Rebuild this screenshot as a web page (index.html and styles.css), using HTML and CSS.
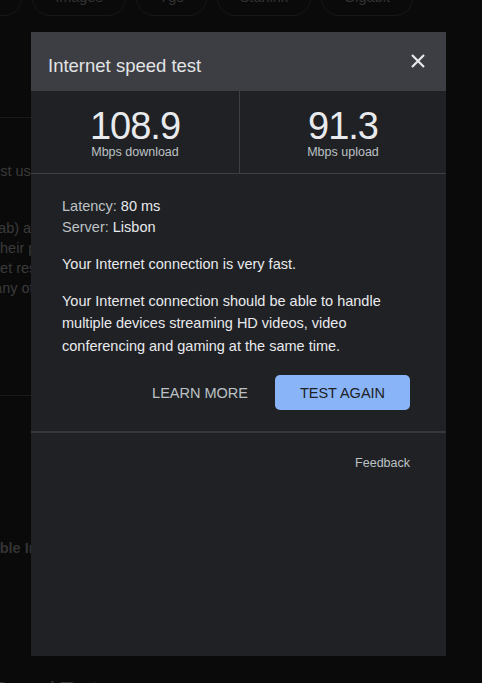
FILE: index.html
```html
<!DOCTYPE html>
<html lang="en">
  <head>
    <meta charset="UTF-8" />
    <meta name="viewport" content="width=device-width, initial-scale=1.0" />
    <title>Internet speed test</title>
    <link rel="stylesheet" href="styles.css">
  </head>
  <body>
    <div class="page">
      <div class="chips">
        <span class="chip">All</span>
        <span class="chip">Images</span>
        <span class="chip">Ygs</span>
        <span class="chip">Starlink</span>
        <span class="chip">Gigabit</span>
      </div>
      <div class="rule rule-top"></div>
      <p class="snip first">most usually</p>
      <p class="snip gap shift-a">(kab) are</p>
      <p class="snip shift-b">their p</p>
      <p class="snip shift-c">Internet res</p>
      <p class="snip shift-d">many ot</p>
      <div class="rule rule-mid"></div>
      <p class="snip bold">Reliable Internet</p>
      <h3 class="snip-head">Speed Test</h3>
    </div>

    <div class="dialog">
      <div class="dialog-header">
        <h2>Internet speed test</h2>
        <svg class="close" width="16" height="16" viewBox="0 0 16 16">
          <path d="M2 2 L14 14 M14 2 L2 14" stroke="#e8eaed" stroke-width="2.2" fill="none" />
        </svg>
      </div>
      <div class="stats">
        <div class="stat">
          <div class="value">108.9</div>
          <div class="unit">Mbps download</div>
        </div>
        <div class="stat">
          <div class="value">91.3</div>
          <div class="unit">Mbps upload</div>
        </div>
      </div>
      <div class="details">
        <div class="meta">
          <div><span class="label">Latency:</span> 80 ms</div>
          <div><span class="label">Server:</span> Lisbon</div>
        </div>
        <p>Your Internet connection is very fast.</p>
        <p>Your Internet connection should be able to handle multiple devices streaming HD videos, video conferencing and gaming at the same time.</p>
        <div class="actions">
          <button class="btn btn-text">LEARN MORE</button>
          <button class="btn btn-primary">TEST AGAIN</button>
        </div>
      </div>
      <div class="dialog-footer">
        <span>Feedback</span>
      </div>
    </div>
  </body>
</html>
```

FILE: styles.css
```css
body {
  margin: 0;
  background-color: #0a0a0a;
  font-family: "Liberation Sans", Arial, sans-serif;
  overflow: hidden;
  height: 683px;
}
.page {
  color: #3a3a3a;
  font-size: 14.5px;
}
.chips {
  display: flex;
  gap: 10px;
  margin-top: -22px;
  margin-left: -40px;
}
.chip {
  height: 36px;
  padding: 0 22px;
  border: 1px solid #181818;
  border-radius: 18px;
  display: flex;
  align-items: center;
  color: #333;
}
.rule {
  height: 1px;
  background-color: #1a1a1a;
  width: 40px;
}
.rule-top {
  margin-top: 101px;
}
.rule-mid {
  margin-top: 97px;
}
.snip {
  margin: 0;
  line-height: 20px;
  white-space: nowrap;
  margin-left: -20px;
}
.snip.first {
  margin-top: 43px;
}
.snip.gap {
  margin-top: 37px;
}
.shift-a {
  margin-left: -14px;
}
.shift-b {
  margin-left: -4px;
}
.shift-c {
  margin-left: -37px;
}
.shift-d {
  margin-left: -18px;
}
.snip.bold {
  margin-top: 142px;
  margin-left: -35px;
  font-weight: bold;
  color: #333;
}
.snip-head {
  margin: 119px 0 0 -6px;
  font-size: 21px;
  font-weight: normal;
  color: #363636;
}

.dialog {
  position: fixed;
  left: 31px;
  top: 32px;
  width: 415px;
  height: 624px;
  background-color: #202124;
  display: flex;
  flex-direction: column;
  color: #e8eaed;
}
.dialog-header {
  height: 59px;
  background-color: #3c3e43;
  display: flex;
  align-items: center;
  justify-content: space-between;
  padding: 0 20px 0 17px;
  flex-shrink: 0;
}
.dialog-header h2 {
  margin: 0;
  font-size: 18.5px;
  font-weight: normal;
  color: #e3e4e6;
  padding-top: 8px;
}
.close {
  margin-top: -2px;
}
.stats {
  display: grid;
  grid-template-columns: 208px 1fr;
  height: 82px;
  border-bottom: 1px solid #3c3e42;
  flex-shrink: 0;
}
.stat {
  text-align: center;
  padding-top: 16px;
}
.stat + .stat {
  border-left: 1px solid #3c3e42;
}
.value {
  font-size: 38px;
  line-height: 38px;
  letter-spacing: -1px;
  color: #e8eaed;
}
.unit {
  font-size: 12.5px;
  line-height: 14px;
  color: #bdc1c6;
}
.details {
  padding: 22px 36px 21px 31px;
  border-bottom: 2px solid #35373b;
  font-size: 14.5px;
  line-height: 22.5px;
}
.meta {
  line-height: 21px;
}
.label {
  color: #bdc1c6;
}
.details p {
  margin: 15px 0 0;
}
.details p + p {
  margin-top: 14px;
}
.actions {
  display: flex;
  justify-content: flex-end;
  align-items: center;
  gap: 27px;
  margin-top: 18px;
}
.btn {
  font-family: inherit;
  font-size: 14.5px;
  border: none;
  height: 35px;
  border-radius: 5px;
  cursor: pointer;
}
.btn-text {
  background: none;
  color: #bdc1c6;
  padding: 0;
}
.btn-primary {
  background-color: #8ab4f8;
  color: #202124;
  width: 135px;
}
.dialog-footer {
  display: flex;
  justify-content: flex-end;
  padding: 23px 36px 0 0;
  font-size: 12.5px;
  color: #bdc1c6;
}
```
